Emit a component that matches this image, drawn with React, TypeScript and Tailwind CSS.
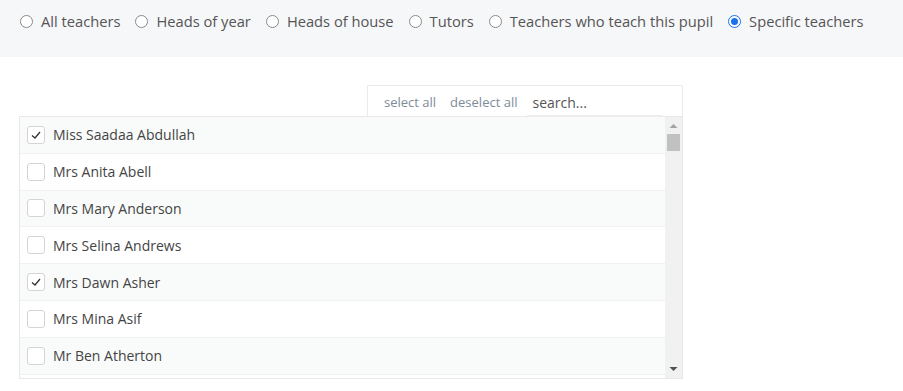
import { useState } from 'react';

const options = [
  'All teachers',
  'Heads of year',
  'Heads of house',
  'Tutors',
  'Teachers who teach this pupil',
  'Specific teachers'
];

const teachers = [
  { name: 'Miss Saadaa Abdullah', checked: true },
  { name: 'Mrs Anita Abell', checked: false },
  { name: 'Mrs Mary Anderson', checked: false },
  { name: 'Mrs Selina Andrews', checked: false },
  { name: 'Mrs Dawn Asher', checked: true },
  { name: 'Mrs Mina Asif', checked: false },
  { name: 'Mr Ben Atherton', checked: false }
];

function Radio({ checked }: { checked: boolean }) {
  if (checked) {
    return (
      <span className="w-[13px] h-[13px] rounded-full border-[1.5px] border-[#1a73e8] bg-white flex items-center justify-center shrink-0">
        <span className="w-[7px] h-[7px] rounded-full bg-[#1a73e8]" />
      </span>
    );
  }
  return <span className="w-[13px] h-[13px] rounded-full border border-[#8a8a8a] bg-white shrink-0" />;
}

function Checkbox({ checked }: { checked: boolean }) {
  return (
    <span className="w-[18px] h-[18px] rounded-[3px] border border-[#d4d4d4] bg-white flex items-center justify-center shrink-0">
      {checked && (
        <svg width="12" height="12" viewBox="0 0 12 12" fill="none">
          <polyline points="2,6.5 5,9 10,3" stroke="#333" strokeWidth="1.3" />
        </svg>
      )}
    </span>
  );
}

export default function App() {
  const [selected, setSelected] = useState(5);
  const [list, setList] = useState(teachers);

  const toggle = (i: number) =>
    setList(l => l.map((t, j) => (j === i ? { ...t, checked: !t.checked } : t)));

  return (
    <div className="w-[903px] h-[391px] bg-white overflow-hidden" style={{ fontFamily: '"Open Sans", "Noto Sans", sans-serif' }}>
      {/* Recipient type */}
      <div className="h-[57px] bg-[#f6f7f9] flex items-start pl-[20px] pt-[11px] text-[14.7px] leading-[20px] text-[#555]">
        {options.map((opt, i) => (
          <label
            key={opt}
            onClick={() => setSelected(i)}
            className="flex items-center gap-[8px] mr-[15px] cursor-pointer"
          >
            <Radio checked={selected === i} />
            <span>{opt}</span>
          </label>
        ))}
      </div>

      {/* Teacher picker */}
      <div className="pl-[19px] pt-[28px] w-[683px]">
        <div className="flex justify-end">
          <div className="w-[316px] h-[31px] border border-b-0 border-[#ebebeb] flex items-center pl-[16px] pt-[3px] text-[13px] text-[#7d8b98]">
            <span className="mr-[14px]">select all</span>
            <span className="mr-[10px]">deselect all</span>
            <div className="w-[135px] h-[28px] border-b-2 border-[#ececec] flex items-end pb-[2px] pl-[5px] text-[14px] text-[#555]">
              search...
            </div>
          </div>
        </div>
        <div className="h-[263px] border border-[#e8e8e8] flex">
          <div className="flex-1 overflow-hidden">
            {list.map((t, i) => (
              <div
                key={t.name}
                onClick={() => toggle(i)}
                className={`h-[36.8px] border-b border-[#f0f2f2] flex items-center pl-[7px] gap-[8px] text-[14px] text-[#444] ${
                  i % 2 === 0 ? 'bg-[#f9fbfb]' : 'bg-white'
                }`}
              >
                <Checkbox checked={t.checked} />
                <span>{t.name}</span>
              </div>
            ))}
          </div>
          {/* Scrollbar */}
          <div className="w-[17px] bg-[#f1f1f1] flex flex-col items-center">
            <svg width="17" height="17" viewBox="0 0 17 17" className="shrink-0">
              <polygon points="4.5,11 8.5,7 12.5,11" fill="#a3a3a3" />
            </svg>
            <div className="w-[13px] h-[17px] bg-[#c1c1c1]" />
            <div className="flex-1" />
            <svg width="17" height="17" viewBox="0 0 17 17" className="shrink-0">
              <polygon points="4.5,6 12.5,6 8.5,10" fill="#505050" />
            </svg>
          </div>
        </div>
      </div>
    </div>
  );
}
